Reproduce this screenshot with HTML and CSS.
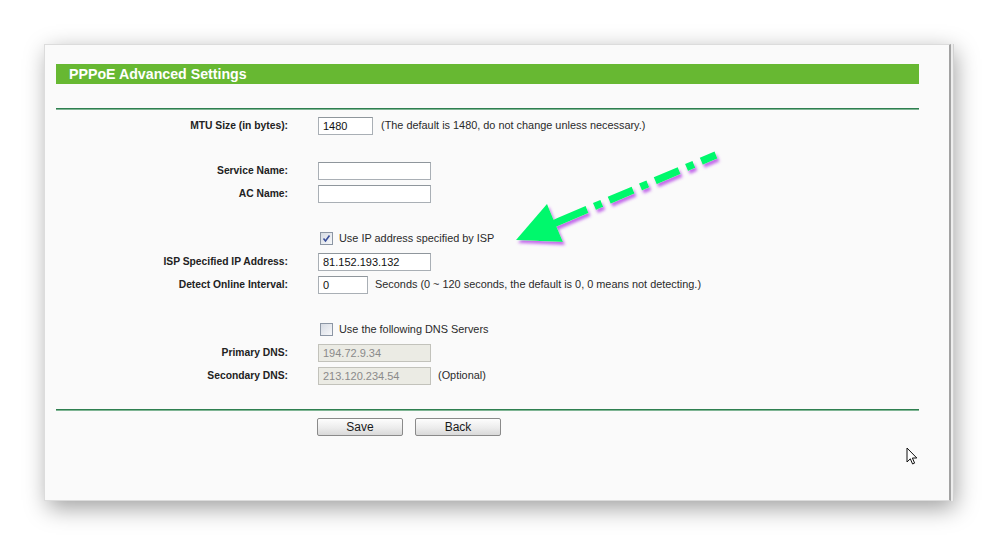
FILE: index.html
```html
<!DOCTYPE html>
<html lang="en">
<head>
<meta charset="utf-8">
<title>PPPoE Advanced Settings</title>
<link rel="stylesheet" href="styles.css">
</head>
<body>
<div class="page">
  <div class="panel">
    <div class="title-bar">PPPoE Advanced Settings</div>
    <div class="rule"></div>

    <div class="form">
      <div class="row">
        <label class="label">MTU Size (in bytes):</label>
        <div class="field"><input class="text w-mtu" type="text" value="1480"><span class="note">(The default is 1480, do not change unless necessary.)</span></div>
      </div>
      <div class="spacer"></div>
      <div class="row">
        <label class="label">Service Name:</label>
        <div class="field"><input class="text w-long" type="text" value=""></div>
      </div>
      <div class="row">
        <label class="label">AC Name:</label>
        <div class="field"><input class="text w-long" type="text" value=""></div>
      </div>
      <div class="spacer"></div>
      <div class="row">
        <span class="label"></span>
        <div class="field"><span class="check checked"><svg viewBox="0 0 13 13" width="13" height="13"><path d="M3.5 6.5 L5.5 9 L9.5 3.5" fill="none" stroke="#3a4f9a" stroke-width="1.6"/></svg></span><span class="check-text">Use IP address specified by ISP</span></div>
      </div>
      <div class="row">
        <label class="label">ISP Specified IP Address:</label>
        <div class="field"><input class="text w-long" type="text" value="81.152.193.132"></div>
      </div>
      <div class="row">
        <label class="label">Detect Online Interval:</label>
        <div class="field"><input class="text w-short" type="text" value="0"><span class="note note-tight">Seconds (0 ~ 120 seconds, the default is 0, 0 means not detecting.)</span></div>
      </div>
      <div class="spacer"></div>
      <div class="row">
        <span class="label"></span>
        <div class="field"><span class="check"></span><span class="check-text">Use the following DNS Servers</span></div>
      </div>
      <div class="row">
        <label class="label">Primary DNS:</label>
        <div class="field"><input class="text w-long" type="text" value="194.72.9.34" disabled></div>
      </div>
      <div class="row">
        <label class="label">Secondary DNS:</label>
        <div class="field"><input class="text w-long" type="text" value="213.120.234.54" disabled><span class="note note-tight">(Optional)</span></div>
      </div>
    </div>

    <div class="rule rule-bottom"></div>
    <div class="actions">
      <button class="btn" type="button">Save</button>
      <button class="btn" type="button">Back</button>
    </div>
  </div>
</div>

<!-- dash-dot pointer drawn over the form -->
<svg class="pointer" width="999" height="546" viewBox="0 0 999 546">
  <defs>
    <filter id="glow" x="-20%" y="-20%" width="140%" height="140%">
      <feDropShadow dx="2" dy="3" stdDeviation="1.8" flood-color="#b23ee6" flood-opacity="0.75"/>
    </filter>
  </defs>
  <g filter="url(#glow)" fill="#00f86c" stroke="#00f86c">
    <line x1="716" y1="155" x2="553" y2="224" stroke-width="7.5" stroke-dasharray="16 8 8 8 26 8 8 8 26 8 8 8 40"/>
    <polygon points="516,240 547,204 563,242" stroke="none"/>
  </g>
</svg>

<!-- mouse cursor -->
<svg class="cursor" width="14" height="20" viewBox="0 0 14 20">
  <path d="M1 1 L1 15 L4.3 11.8 L6.6 17 L8.6 16.1 L6.4 11 L10.8 11 Z" fill="#fff" stroke="#111" stroke-width="1" stroke-linejoin="round"/>
</svg>
</body>
</html>
```
FILE: styles.css
```css
html, body {
  margin: 0;
  padding: 0;
}

body {
  width: 999px;
  height: 546px;
  overflow: hidden;
  background: #ffffff;
  position: relative;
  font-family: "Liberation Sans", Arial, sans-serif;
  color: #1e1e1e;
}

.page {
  padding: 44px 0 0 44px;
}

.panel {
  box-sizing: border-box;
  width: 907px;
  height: 457px;
  padding: 19px 0 0 11px;
  background: #fafafa;
  border: 1px solid #dcdcdc;
  border-right: 2px solid #a2a2a2;
  box-shadow:
    2px 0 0 #ededed,
    3px 0 0 #d2d2d2,
    4px 7px 22px rgba(0, 0, 0, 0.38);
}

.title-bar {
  width: 863px;
  height: 20px;
  line-height: 20px;
  box-sizing: border-box;
  padding-left: 13px;
  background: #67b832;
  color: #ffffff;
  font-weight: bold;
  font-size: 14.2px;
}

.rule {
  width: 863px;
  height: 2px;
  margin-top: 24px;
  background: linear-gradient(#2f7f50 0 1px, #7fb594 1px 2px);
}

.rule-bottom {
  margin-top: 22px;
}

.form {
  margin-top: 4px;
}

.row {
  display: grid;
  grid-template-columns: 232px 1fr;
  column-gap: 30px;
  height: 23px;
  align-items: center;
}

.spacer {
  height: 22px;
}

.label {
  text-align: right;
  font-weight: bold;
  font-size: 10.3px;
  color: #222;
}

.field {
  display: flex;
  align-items: center;
}

.text {
  box-sizing: border-box;
  height: 18px;
  margin: 0;
  padding: 0 4px;
  border: 1px solid #a9afb5;
  border-top-color: #8f969c;
  background: #ffffff;
  font-family: "Liberation Sans", Arial, sans-serif;
  font-size: 11px;
  color: #111;
  outline: none;
}

.text:disabled {
  background: #ebebe4;
  border-color: #c2c2bb;
  color: #8a8a8a;
}

.w-mtu { width: 55px; }
.w-long { width: 113px; }
.w-short { width: 50px; }

.note {
  margin-left: 8px;
  padding-bottom: 2px;
  font-size: 10.9px;
  color: #2a2a2a;
}

.note-tight {
  margin-left: 7px;
}

.check {
  box-sizing: border-box;
  width: 13px;
  height: 13px;
  margin-left: 2px;
  border: 1px solid #8c96a4;
  background: linear-gradient(135deg, #d6dbe3, #f7f8fa);
  display: inline-flex;
}

.check svg {
  margin: -1px;
}

.check-text {
  margin-left: 6px;
  padding-bottom: 2px;
  font-size: 10.9px;
  color: #2a2a2a;
}

.actions {
  display: flex;
  gap: 12px;
  margin: 7px 0 0 261px;
}

.btn {
  box-sizing: border-box;
  width: 86px;
  height: 18px;
  margin: 0;
  padding: 0;
  border: 1px solid #8a8a8a;
  border-radius: 2px;
  background: linear-gradient(#fdfdfd, #ececec 55%, #d9d9d9);
  font-family: "Liberation Sans", Arial, sans-serif;
  font-size: 12px;
  line-height: 16px;
  color: #1a1a1a;
}

.pointer {
  position: absolute;
  left: 0;
  top: 0;
  pointer-events: none;
}

.cursor {
  position: absolute;
  left: 906px;
  top: 447px;
  pointer-events: none;
}
```
